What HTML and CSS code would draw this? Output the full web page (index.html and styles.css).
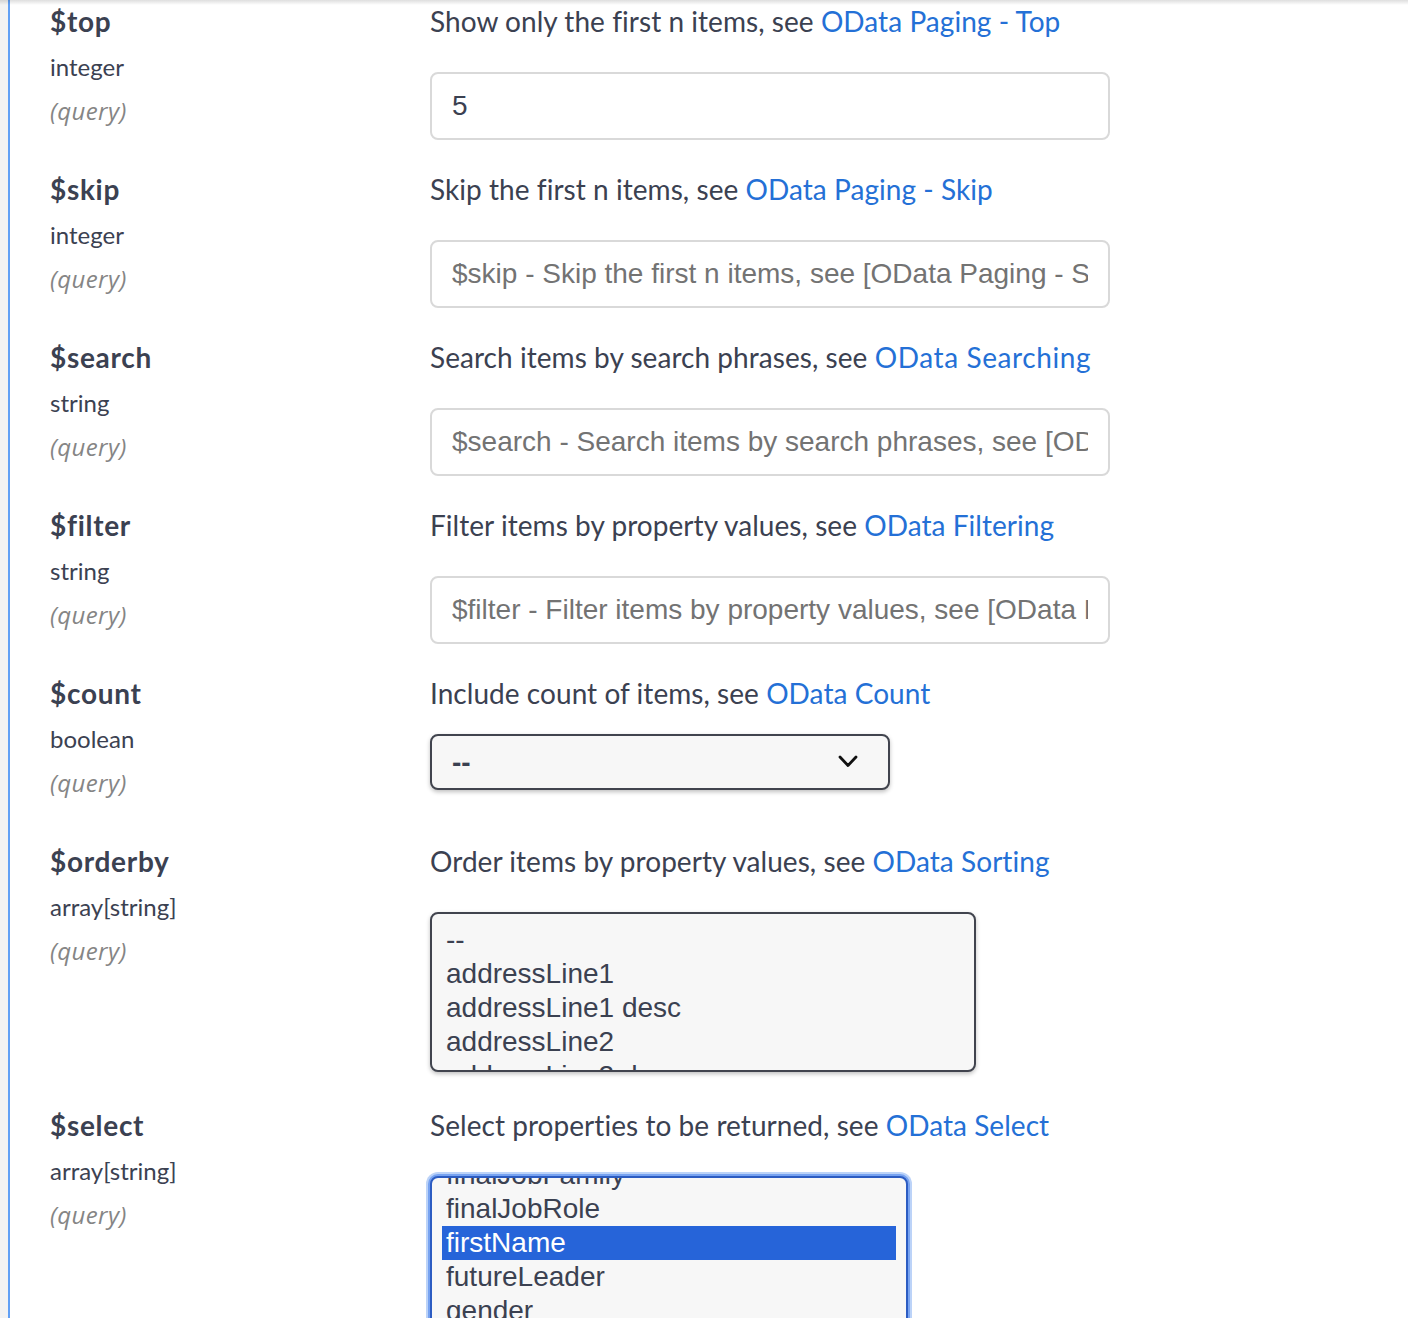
FILE: index.html
```html
<!DOCTYPE html>
<html lang="en">
<head>
<meta charset="utf-8">
<title>Parameters</title>
<link rel="stylesheet" href="styles.css">
</head>
<body>
<div class="page">
  <div class="opblock">
    <table class="params">
      <tbody>
        <tr>
          <td class="col-name">
            <div class="p-name">$top</div>
            <div class="p-type">integer</div>
            <div class="p-in">(query)</div>
          </td>
          <td class="col-desc">
            <div class="p-desc">Show only the first n items, see <a href="#">OData Paging - Top</a></div>
            <input class="text-input" type="text" value="5" placeholder="$top - Show only the first n items, see [OData Paging - Top](http://docs.oasis-open.org/odata/odata/v4.01/)">
          </td>
        </tr>
        <tr>
          <td class="col-name">
            <div class="p-name">$skip</div>
            <div class="p-type">integer</div>
            <div class="p-in">(query)</div>
          </td>
          <td class="col-desc">
            <div class="p-desc">Skip the first n items, see <a href="#">OData Paging - Skip</a></div>
            <input class="text-input" type="text" placeholder="$skip - Skip the first n items, see [OData Paging - Skip](http://docs.oasis-open.org/odata/odata/v4.01/)">
          </td>
        </tr>
        <tr>
          <td class="col-name">
            <div class="p-name">$search</div>
            <div class="p-type">string</div>
            <div class="p-in">(query)</div>
          </td>
          <td class="col-desc">
            <div class="p-desc">Search items by search phrases, see <a href="#" class="link-wide">OData Searching</a></div>
            <input class="text-input" type="text" placeholder="$search - Search items by search phrases, see [OData Searching](http://docs.oasis-open.org/odata/odata/v4.01/)">
          </td>
        </tr>
        <tr>
          <td class="col-name">
            <div class="p-name">$filter</div>
            <div class="p-type">string</div>
            <div class="p-in">(query)</div>
          </td>
          <td class="col-desc">
            <div class="p-desc">Filter items by property values, see <a href="#">OData Filtering</a></div>
            <input class="text-input" type="text" placeholder="$filter - Filter items by property values, see [OData Filtering](http://docs.oasis-open.org/odata/odata/v4.01/)">
          </td>
        </tr>
        <tr>
          <td class="col-name">
            <div class="p-name">$count</div>
            <div class="p-type">boolean</div>
            <div class="p-in">(query)</div>
          </td>
          <td class="col-desc">
            <div class="p-desc">Include count of items, see <a href="#">OData Count</a></div>
            <div class="select-wrap">
              <select class="select">
                <option>--</option>
                <option>true</option>
                <option>false</option>
              </select>
              <svg class="chevron" viewBox="0 0 20 13" aria-hidden="true"><polyline points="2,2 10,10.5 18,2" fill="none" stroke="#111" stroke-width="2.8" stroke-linecap="round" stroke-linejoin="round"/></svg>
            </div>
          </td>
        </tr>
        <tr>
          <td class="col-name">
            <div class="p-name">$orderby</div>
            <div class="p-type">array[string]</div>
            <div class="p-in">(query)</div>
          </td>
          <td class="col-desc">
            <div class="p-desc">Order items by property values, see <a href="#">OData Sorting</a></div>
            <div class="listbox listbox-orderby" role="listbox" aria-multiselectable="true">
              <div class="option" role="option">--</div>
              <div class="option" role="option">addressLine1</div>
              <div class="option" role="option">addressLine1 desc</div>
              <div class="option" role="option">addressLine2</div>
              <div class="option" role="option">addressLine2 desc</div>
              <div class="option" role="option">addressLine3</div>
              <div class="option" role="option">addressLine3 desc</div>
              <div class="option" role="option">businessPhone</div>
              <div class="option" role="option">businessPhone desc</div>
            </div>
          </td>
        </tr>
        <tr>
          <td class="col-name">
            <div class="p-name">$select</div>
            <div class="p-type">array[string]</div>
            <div class="p-in">(query)</div>
          </td>
          <td class="col-desc">
            <div class="p-desc">Select properties to be returned, see <a href="#">OData Select</a></div>
            <div class="listbox listbox-select is-focused" role="listbox" aria-multiselectable="true" tabindex="0">
              <div class="option" role="option">--</div>
              <div class="option" role="option">addressLine1</div>
              <div class="option" role="option">addressLine2</div>
              <div class="option" role="option">addressLine3</div>
              <div class="option" role="option">businessPhone</div>
              <div class="option" role="option">businessSegment</div>
              <div class="option" role="option">citizenship</div>
              <div class="option" role="option">city</div>
              <div class="option" role="option">country</div>
              <div class="option" role="option">dateOfBirth</div>
              <div class="option" role="option">dateOfCurrentPosition</div>
              <div class="option" role="option">dateOfPosition</div>
              <div class="option" role="option">defaultLocale</div>
              <div class="option" role="option">department</div>
              <div class="option" role="option">division</div>
              <div class="option" role="option">email</div>
              <div class="option" role="option">empId</div>
              <div class="option" role="option">employeeClass</div>
              <div class="option" role="option">ethnicity</div>
              <div class="option" role="option">fax</div>
              <div class="option" role="option">finalJobCode</div>
              <div class="option" role="option">finalJobFamily</div>
              <div class="option" role="option" data-anchor="true">finalJobRole</div>
              <div class="option selected" role="option" aria-selected="true">firstName</div>
              <div class="option" role="option">futureLeader</div>
              <div class="option" role="option">gender</div>
              <div class="option" role="option">hireDate</div>
              <div class="option" role="option">homePhone</div>
              <div class="option" role="option">hrId</div>
              <div class="option" role="option">jobCode</div>
              <div class="option" role="option">jobFamily</div>
              <div class="option" role="option">jobLevel</div>
              <div class="option" role="option">jobRole</div>
              <div class="option" role="option">jobTitle</div>
              <div class="option" role="option">lastName</div>
              <div class="option" role="option">location</div>
            </div>
          </td>
        </tr>
      </tbody>
    </table>
  </div>
</div>
<script src="script.js"></script>
</body>
</html>
```

FILE: styles.css
```css
html, body {
  margin: 0;
  padding: 0;
  overflow: hidden;
}

body {
  background: #ffffff;
  font-family: Lato, "Noto Sans", sans-serif;
  color: #3b4151;
}

.page {
  position: relative;
  background: #f3f3f3;
  padding-left: 8px;
  min-height: 1318px;
}

.page::before {
  content: "";
  position: absolute;
  top: 0;
  left: 0;
  right: 0;
  height: 5px;
  background: linear-gradient(rgba(0, 0, 0, 0.13), rgba(0, 0, 0, 0));
  pointer-events: none;
  z-index: 2;
}

.opblock {
  background: #ffffff;
  border-left: 2px solid #61a0f5;
  padding: 0 40px 240px;
  min-height: 1318px;
}

.params {
  border-collapse: collapse;
  border-spacing: 0;
}

.params td {
  padding: 1px 0 28px;
  vertical-align: top;
}

.col-name {
  width: 380px;
}

.p-name {
  font-size: 28px;
  font-weight: 700;
  line-height: 40px;
  letter-spacing: 0.7px;
}

.p-type {
  font-size: 24px;
  line-height: 44px;
  padding-top: 4px;
}

.p-in {
  font-family: "Open Sans", "Noto Sans", sans-serif;
  font-size: 24px;
  line-height: 44px;
  font-style: italic;
  letter-spacing: 0.4px;
  color: #858585;
}

.p-desc {
  font-size: 28px;
  line-height: 40px;
  white-space: nowrap;
  letter-spacing: 0.05px;
}

.p-desc a {
  color: #2470d6;
  text-decoration: none;
}

.p-desc a.link-wide {
  letter-spacing: 0.6px;
}

.text-input {
  display: block;
  box-sizing: border-box;
  width: 680px;
  height: 68px;
  margin: 31px 0 0;
  padding: 0 20px;
  border: 2px solid #d9d9d9;
  border-radius: 8px;
  background: #ffffff;
  font: 28px "Liberation Sans", Arial, sans-serif;
  color: #3b4151;
  outline: none;
}

.text-input::placeholder {
  color: #737373;
  opacity: 1;
}

.select-wrap {
  position: relative;
  width: 460px;
  margin: 21px 0 22px;
}

.select {
  -webkit-appearance: none;
  appearance: none;
  display: block;
  box-sizing: border-box;
  width: 100%;
  height: 56px;
  padding: 0 20px;
  border: 2px solid #41444e;
  border-radius: 8px;
  background: #f7f7f7;
  box-shadow: 0 2px 4px rgba(0, 0, 0, 0.25);
  font: 700 28px "Liberation Sans", Arial, sans-serif;
  color: #3b4151;
  outline: none;
}

.chevron {
  position: absolute;
  right: 32px;
  top: 21px;
  width: 20px;
  height: 13px;
  pointer-events: none;
}

.listbox {
  box-sizing: border-box;
  height: 160px;
  overflow: hidden;
  margin: 31px 0 4px;
  padding: 9px 10px 0;
  border: 2px solid #41444e;
  border-radius: 8px;
  background: #f7f7f7;
  box-shadow: 0 2px 4px rgba(0, 0, 0, 0.25);
  font: 28px/34px "Liberation Sans", Arial, sans-serif;
  color: #3b4151;
  outline: none;
}

.listbox-orderby {
  width: 546px;
}

.listbox-select {
  width: 478px;
}

.listbox.is-focused {
  border-color: #2c5cc2;
  box-shadow: 0 0 0 2px #77a3f1, 0 0 0 4px #bcd3f8;
}

.option {
  height: 34px;
  padding: 0 4px;
  white-space: nowrap;
}

.option.selected {
  background: #2664d9;
  color: #ffffff;
}
```

FILE: script.js
```js
(function () {
  var list = document.querySelector('.listbox-select');
  if (!list) return;
  var anchor = list.querySelector('[data-anchor]');
  if (!anchor) return;
  var offset = anchor.getBoundingClientRect().top - list.getBoundingClientRect().top - list.clientTop;
  list.scrollTop = offset - 14;
})();
```
